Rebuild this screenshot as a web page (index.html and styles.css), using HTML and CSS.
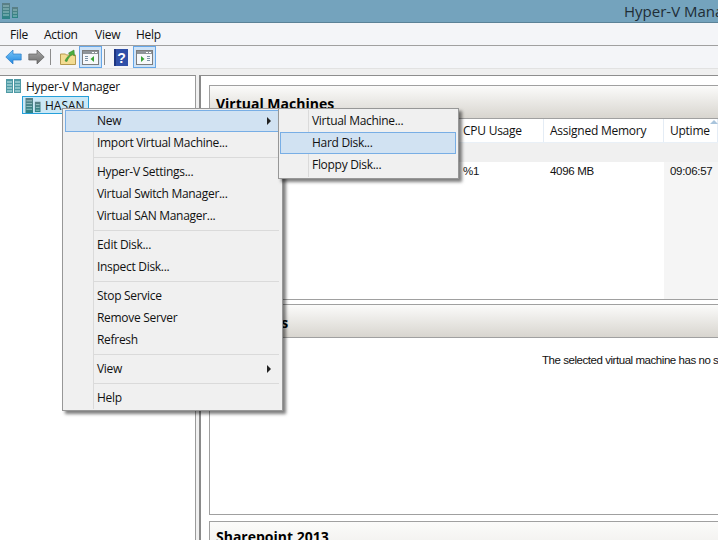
FILE: index.html
```html
<!DOCTYPE html>
<html lang="en">
<head>
    <meta charset="UTF-8">
    <meta name="viewport" content="width=device-width, initial-scale=1.0">
    <title>Hyper-V Manager</title>
    <link rel="stylesheet" href="styles.css">
</head>
<body>
    <svg class="defs" width="0" height="0">
        <defs>
            <linearGradient id="blueArrow" x1="0" y1="0" x2="0" y2="1">
                <stop offset="0" stop-color="#7cc8f7"/>
                <stop offset="1" stop-color="#1f86e0"/>
            </linearGradient>
            <linearGradient id="greyArrow" x1="0" y1="0" x2="0" y2="1">
                <stop offset="0" stop-color="#a8a8a8"/>
                <stop offset="1" stop-color="#6e6e6e"/>
            </linearGradient>
            <linearGradient id="tower" x1="0" y1="0" x2="0" y2="1">
                <stop offset="0" stop-color="#5d7f86"/>
                <stop offset="1" stop-color="#2a8386"/>
            </linearGradient>
            <symbol id="server" viewBox="0 0 16 16">
                <rect x="0" y="0" width="8" height="16" fill="url(#tower)"/>
                <path d="M1 3h6M1 6h6M1 9h6M1 12h6" stroke="#bfe3e3" stroke-opacity=".7"/>
                <rect x="10" y="4" width="6" height="11" fill="url(#tower)"/>
                <path d="M11 7h4M11 10h4M11 13h4" stroke="#bfe3e3" stroke-opacity=".7"/>
            </symbol>
            <symbol id="pane" viewBox="0 0 17 15">
                <rect x="0.5" y="0.5" width="16" height="14" fill="#f7f8fa" stroke="#7c7c7c"/>
                <rect x="1" y="1" width="15" height="3" fill="#8f9499"/>
                <rect x="13" y="2" width="2" height="1" fill="#fff"/>
                <rect x="10" y="2" width="2" height="1" fill="#fff"/>
            </symbol>
        </defs>
    </svg>

    <div class="titlebar">
        <svg class="title-icon"><use href="#server"/></svg>
        <span class="title-text">Hyper-V Manager</span>
    </div>

    <div class="menubar">
        <span>File</span>
        <span>Action</span>
        <span>View</span>
        <span>Help</span>
    </div>

    <div class="toolbar">
        <svg class="tool" width="17" height="16" viewBox="0 0 17 16"><path d="M.8 8 8 1v4h8.200v6H8v4z" fill="url(#blueArrow)" stroke="#2a7cc9" stroke-width=".7"/></svg>
        <svg class="tool tool-forward" width="17" height="16" viewBox="0 0 17 16"><path d="M16.200 8 9 1v4H.8v6H9v4z" fill="url(#greyArrow)" stroke="#5f5f5f" stroke-width=".7"/></svg>
        <span class="tool-sep"></span>
        <svg class="tool tool-folder" width="16" height="16" viewBox="0 0 16 16">
            <path d="M.5 5h5l1 1h9v9.500H.5z" fill="#f3dc92" stroke="#b59a4e"/>
            <path d="M5 12c1-3 3-5 5-6L8.500 4 14 1l.5 6-2-1.500C10 7 8 9 7 12.500z" fill="#4cae3f" stroke="#2f7d27" stroke-width=".5"/>
        </svg>
        <span class="tool-btn">
            <svg width="17" height="15"><use href="#pane"/><rect x="3" y="6" width="3" height="1" fill="#7c93a8"/><rect x="3" y="8" width="3" height="1" fill="#7c93a8"/><rect x="3" y="10" width="3" height="1" fill="#7c93a8"/><path d="M12 6v6L8.500 9z" fill="#3aa335"/></svg>
        </span>
        <span class="tool-sep"></span>
        <svg class="tool tool-help" width="14" height="17" viewBox="0 0 14 17">
            <rect width="14" height="17" fill="#2f4fa8"/>
            <rect x="0" y="0" width="2" height="17" fill="#1d3580"/>
            <text x="7.500" y="14" text-anchor="middle" class="help-mark">?</text>
        </svg>
        <span class="tool-btn">
            <svg width="17" height="15"><use href="#pane"/><rect x="11" y="6" width="3" height="1" fill="#7c93a8"/><rect x="11" y="8" width="3" height="1" fill="#7c93a8"/><rect x="11" y="10" width="3" height="1" fill="#7c93a8"/><path d="M5 6v6L8.500 9z" fill="#3aa335"/></svg>
        </span>
    </div>

    <div class="main">
        <div class="tree">
            <div class="tree-root">
                <svg width="15" height="14" viewBox="0 0 15 14">
                    <rect width="7" height="14" fill="#4f9aa5"/>
                    <rect x="8" width="7" height="14" fill="#4f9aa5"/>
                    <path d="M1 3h5M1 6h5M1 9h5M1 12h5M9 3h5M9 6h5M9 9h5M9 12h5" stroke="#c9ecec"/>
                </svg>
                <span>Hyper-V Manager</span>
            </div>
            <div class="tree-node">
                <svg class="node-icon"><use href="#server"/></svg>
                <span>HASAN</span>
            </div>
        </div>

        <div class="content">
            <div class="panel panel-vms">
                <div class="panel-head">Virtual Machines</div>
                <div class="grid-row grid-head">
                    <span></span>
                    <span>CPU Usage</span>
                    <span>Assigned Memory</span>
                    <span>Uptime<i class="sort-arrow"></i></span>
                </div>
                <div class="grid-group"></div>
                <div class="grid-row grid-data">
                    <span></span>
                    <span>%1</span>
                    <span>4096 MB</span>
                    <span>09:06:57</span>
                </div>
            </div>

            <div class="panel panel-details">
                <div class="panel-head">Snapshots</div>
                <p class="empty-note">The selected virtual machine has no snapshots.</p>
            </div>

            <div class="panel panel-last">
                <div class="panel-head">Sharepoint 2013</div>
            </div>
        </div>
    </div>

    <div class="menu menu-main">
        <div class="item item-on">New<i class="caret"></i></div>
        <div class="item">Import Virtual Machine...</div>
        <div class="sep"></div>
        <div class="item">Hyper-V Settings...</div>
        <div class="item">Virtual Switch Manager...</div>
        <div class="item">Virtual SAN Manager...</div>
        <div class="sep"></div>
        <div class="item">Edit Disk...</div>
        <div class="item">Inspect Disk...</div>
        <div class="sep"></div>
        <div class="item">Stop Service</div>
        <div class="item">Remove Server</div>
        <div class="item">Refresh</div>
        <div class="sep"></div>
        <div class="item">View<i class="caret"></i></div>
        <div class="sep"></div>
        <div class="item">Help</div>
    </div>

    <div class="menu menu-sub">
        <div class="item">Virtual Machine...</div>
        <div class="item item-on">Hard Disk...</div>
        <div class="item">Floppy Disk...</div>
    </div>
</body>
</html>
```

FILE: styles.css
```css
html, body { margin: 0; padding: 0; height: 100%; }
body { width: 718px; height: 540px; overflow: hidden; position: relative; display: flex; flex-direction: column; background: #f0f0f0; font-family: "Open Sans", "Liberation Sans", sans-serif; font-size: 12px; letter-spacing: -0.25px; color: #111; }
.defs { position: absolute; }

.titlebar { flex: 0 0 22px; display: flex; align-items: center; background: #74a3bd; border-bottom: 1px solid #5b8297; overflow: hidden; white-space: nowrap; }
.title-icon { width: 16px; height: 16px; margin-left: 2px; flex: none; }
.title-text { margin-left: 606px; font-size: 15px; color: #1f2d36; letter-spacing: 0; }

.menubar { flex: 0 0 22px; display: flex; align-items: center; background: #f4f5f8; border-bottom: 1px solid #a0a0a0; padding-left: 10px; }
.menubar span:nth-child(1) { width: 34px; }
.menubar span:nth-child(2) { width: 51px; }
.menubar span:nth-child(3) { width: 41px; }

.toolbar { flex: 0 0 22px; display: flex; align-items: center; background: #f4f5f8; border-bottom: 1px solid #e2e2e2; padding-left: 5px; }
.tool { flex: none; margin-right: 6px; }
.tool-forward { margin-right: 5px; }
.tool-sep { width: 1px; height: 16px; background: #8c8c8c; margin-right: 9px; }
.tool-folder { margin-right: 3px; }
.tool-help { margin-right: 5px; }
.tool-btn { flex: none; width: 23px; height: 22px; box-sizing: border-box; margin-right: 2px; display: flex; align-items: center; justify-content: center; background: #cfe3f7; border: 1px solid #66a7e8; }
.help-mark { font: bold 14px "Liberation Sans", sans-serif; fill: #fff; }

.main { flex: 1; display: flex; margin-top: 6px; min-height: 0; }
.tree { flex: 0 0 196px; box-sizing: border-box; background: #fff; border-top: 1px solid #8e8e8e; border-right: 1px solid #9a9a9a; padding-top: 1px; }
.tree-root { display: flex; align-items: center; gap: 5px; height: 18px; padding-left: 6px; }
.tree-node { display: flex; align-items: center; gap: 4px; box-sizing: border-box; width: 67px; height: 18px; margin: 1px 0 0 22px; padding-left: 2px; letter-spacing: 0; background: #cbe8f6; border: 1px solid #26a0da; }
.node-icon { width: 16px; height: 15px; flex: none; }

.content { flex: 1; margin-left: 3px; background: #fff; border-top: 1px solid #8e8e8e; border-left: 2px solid #8a8a8a; padding: 9px 0 0 8px; display: flex; flex-direction: column; gap: 4px; min-width: 0; overflow: hidden; }
.panel { flex: none; border: 1px solid #a0a0a0; border-right: 0; background: #fff; }
.panel-vms { height: 213px; }
.panel-details { height: 209px; }
.panel-last { height: 40px; margin-top: 2px; border-bottom: 0; }
.panel-head { height: 33px; box-sizing: border-box; padding: 9px 0 0 6px; font-size: 14px; font-weight: bold; letter-spacing: 0; color: #000; line-height: 18px; background: linear-gradient(#fbfbfa, #d8d5cf); border-bottom: 1px solid #a0a0a0; }
.panel-last .panel-head { padding-top: 6px; background: linear-gradient(#fbfbfa, #eeedea); border-bottom: 0; }

.grid-row { display: grid; grid-template-columns: 247px 87px 120px 1fr; white-space: nowrap; }
.grid-head { height: 23px; align-items: center; border-bottom: 1px solid #e9f0f7; }
.grid-head span { height: 23px; line-height: 23px; box-sizing: border-box; padding-left: 6px; border-right: 1px solid #e4ecf5; position: relative; }
.grid-head span:first-child { border-right: 0; }
.grid-group { height: 19px; background: #f0f0f0; }
.grid-data { height: 137px; font-family: "Liberation Sans", sans-serif; font-size: 11.5px; letter-spacing: -0.3px; line-height: 18px; }
.grid-data span { padding-left: 6px; }
.grid-data span:last-child { background: #f5f5f5; }
.sort-arrow { position: absolute; left: 46px; top: 1px; width: 0; height: 0; border-left: 4px solid transparent; border-right: 4px solid transparent; border-bottom: 4px solid #a9c4dc; }

.empty-note { margin: 13px 0 0 332px; font-family: "Liberation Sans", sans-serif; font-size: 11.5px; letter-spacing: -0.45px; white-space: nowrap; line-height: 18px; }

.menu { position: absolute; box-sizing: border-box; padding: 1px 2px 1px 1px; background: #f0f0f0; border: 1px solid #979797; box-shadow: 3px 3px 3px rgba(0, 0, 0, 0.5); }
.menu::before { content: ""; position: absolute; top: 1px; bottom: 1px; width: 1px; background: #dadada; }
.menu-main { left: 62px; top: 108px; width: 221px; height: 303px; }
.menu-main::before { left: 30px; }
.menu-sub { left: 278px; top: 108px; width: 181px; height: 71px; }
.menu-sub::before { left: 29px; }
.item { position: relative; box-sizing: border-box; height: 22px; line-height: 20px; padding-left: 31px; border: 1px solid transparent; white-space: nowrap; letter-spacing: -0.3px; }
.menu-main .item { margin-left: 1px; }
.item-on { background: #d1e2f2; border-color: #78aee5; }
.sep { height: 1px; margin: 3px 1px 3px 30px; background: #dadada; }
.caret { position: absolute; right: 8px; top: 6px; width: 0; height: 0; border-top: 4px solid transparent; border-bottom: 4px solid transparent; border-left: 4px solid #222; }
```
